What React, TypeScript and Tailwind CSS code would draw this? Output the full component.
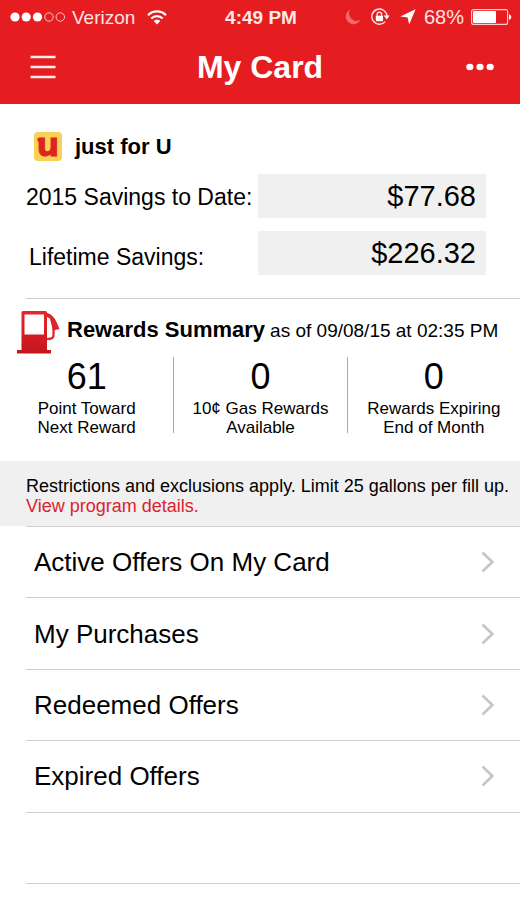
const stats = [
  { value: "61", lines: ["Point Toward", "Next Reward"] },
  { value: "0", lines: ["10¢ Gas Rewards", "Available"] },
  { value: "0", lines: ["Rewards Expiring", "End of Month"] },
];

const links = ["Active Offers On My Card", "My Purchases", "Redeemed Offers", "Expired Offers"];

function StatusBar() {
  return (
    <div className="grid grid-cols-[1fr_auto_1fr] items-center h-[34px] pl-[10px] pr-2 text-[19px] leading-none">
      <div className="flex items-center">
        <svg width="56" height="12" viewBox="0 0 56 12" fill="none" aria-hidden="true">
          <circle cx="5" cy="6" r="4.6" fill="#fff" />
          <circle cx="16.2" cy="6" r="4.6" fill="#fff" />
          <circle cx="27.5" cy="6" r="4.6" fill="#fff" />
          <circle cx="39" cy="6" r="4.2" stroke="#fbc4c4" strokeWidth="1" />
          <circle cx="50.3" cy="6" r="4.2" stroke="#fbc4c4" strokeWidth="1" />
        </svg>
        <span className="ml-[6px] text-[#ffe4e4]">Verizon</span>
        <svg className="ml-3" width="20" height="15" viewBox="0 0 20 15" fill="none" stroke="#fff" strokeWidth="2.2" aria-hidden="true">
          <path d="M1 5.2C6 .2 14 .2 19 5.2" />
          <path d="M4.3 8.5c3.2-3.1 8.2-3.1 11.4 0" />
          <path d="M6.7 11C8.5 9.2 11.5 9.2 13.3 11L10 14.5z" fill="#fff" stroke="none" />
        </svg>
      </div>
      <span className="font-bold text-[#ffe9e9]">4:49 PM</span>
      <div className="flex items-center justify-end">
        <svg width="16" height="16" viewBox="0 0 16 16" fill="#f4696c" aria-hidden="true">
          <path d="M5 .8A7.6 7.6 0 1 0 15.4 10.6 7.4 7.4 0 0 1 5 .8z" />
        </svg>
        <svg className="ml-[10px]" width="19" height="18" viewBox="0 0 19 18" fill="none" stroke="#ffe4e4" strokeWidth="1.4" aria-hidden="true">
          <path d="M14.2 13.6A7.6 7.6 0 1 1 16 8" />
          <path d="M12.7 7.6h6L15.8 11.4z" fill="#fff" stroke="none" />
          <rect x="4.8" y="7.8" width="7.2" height="5.4" rx=".6" fill="#fff" stroke="none" />
          <path d="M6.2 8V6.3a2.2 2.2 0 0 1 4.4 0V8" />
        </svg>
        <svg className="ml-[10px]" width="16" height="16" viewBox="0 0 16 16" fill="#fff" aria-hidden="true">
          <path d="M15.6.3 9.2 15.4 7.6 8.5.3 7.4z" />
        </svg>
        <span className="ml-[8px] text-[20px] text-[#ffe4e4]">68%</span>
        <svg className="ml-[7px]" width="41" height="16" viewBox="0 0 41 16" fill="none" aria-hidden="true">
          <rect x=".6" y=".6" width="36" height="14.8" rx="2" stroke="#fbd0d0" strokeWidth="1.1" />
          <rect x="2" y="2" width="23" height="12" rx="1" fill="#fff" />
          <path d="M38 5.2c3 .6 3 5 0 5.6z" fill="#fff" />
        </svg>
      </div>
    </div>
  );
}

function Header() {
  return (
    <header className="bg-[#e51d21] text-white pb-1">
      <StatusBar />
      <div className="grid grid-cols-[1fr_auto_1fr] items-center h-[66px] px-[26px]">
        <button aria-label="Menu" className="justify-self-start p-1">
          <svg width="26" height="26" viewBox="0 0 26 26" stroke="#ffecec" strokeWidth="2.4" aria-hidden="true">
            <path d="M.5 3h25M.5 13h25M.5 23h25" />
          </svg>
        </button>
        <h1 className="text-[32px] font-bold leading-none">My Card</h1>
        <button aria-label="More" className="justify-self-end">
          <svg width="28" height="8" viewBox="0 0 28 8" fill="#fff" aria-hidden="true">
            <ellipse cx="3.8" cy="4" rx="3.6" ry="3.2" />
            <ellipse cx="14" cy="4" rx="3.6" ry="3.2" />
            <ellipse cx="24.2" cy="4" rx="3.6" ry="3.2" />
          </svg>
        </button>
      </div>
    </header>
  );
}

function ULogo() {
  return (
    <svg className="overflow-visible" width="28" height="29" viewBox="0 0 28 29" aria-hidden="true">
      <rect width="28" height="29" rx="4" fill="#f8d255" />
      <text x="14" y="24" textAnchor="middle" fill="#dd2420" stroke="#dd2420" strokeWidth=".8" fontSize="32" fontWeight="700" fontFamily="DejaVu Sans">
        u
      </text>
      <rect x="3.5" y="6" width="4" height="3.5" fill="#dd2420" />
    </svg>
  );
}

function GasPump() {
  return (
    <svg width="43" height="44" viewBox="0 0 43 44" fill="none" aria-hidden="true">
      <defs>
        <linearGradient id="pump" x1="0" y1="0" x2="0" y2="1">
          <stop offset="0" stopColor="#e8262c" />
          <stop offset="1" stopColor="#c4151c" />
        </linearGradient>
      </defs>
      <path
        fill="url(#pump)"
        fillRule="evenodd"
        d="M6 0h22.5Q30 0 30 1.5V39H34V42.5H0V39H4.5V1.5Q4.5 0 6 0zM7.5 3.5V23.5H27V3.5z"
      />
      <path d="M29 1.5C35 3 38.5 7 42.5 18L36 19.5 33 7.5 29 5.500z" fill="#de2329" />
      <path d="M34.5 8Q37 14 36.5 25Q36 28 30 28" stroke="#de2329" strokeWidth="2.2" />
    </svg>
  );
}

export default function App() {
  return (
    <div className="flex min-h-screen flex-col bg-white text-black font-['Liberation_Sans',Arial,sans-serif]">
      <Header />

      <main className="flex flex-1 flex-col">
        {/* Savings */}
        <section className="pt-7 pl-[26px]">
          <div className="flex items-center gap-[13px] pl-2">
            <ULogo />
            <h2 className="text-[22px] font-bold leading-6">just for U</h2>
          </div>
          <dl className="mt-[13px] grid grid-cols-[232px_1fr] gap-y-[13px] pr-[34px]">
            <dt className="pt-[11px] text-[23px] leading-6 whitespace-nowrap">2015 Savings to Date:</dt>
            <dd className="h-11 bg-[#f0f0f0] pr-[10px] text-right text-[29px] leading-[45px]">$77.68</dd>
            <dt className="pt-[14px] pl-[3px] text-[23px] leading-6 whitespace-nowrap">Lifetime Savings:</dt>
            <dd className="h-11 bg-[#f0f0f0] pr-[10px] text-right text-[29px] leading-[45px]">$226.32</dd>
          </dl>
          <hr className="mt-[23px] border-[#cfcfcf]" />
        </section>

        {/* Rewards */}
        <section className="pt-3 pb-7">
          <div className="flex h-[42px] items-start gap-[7px] pl-[17px]">
            <GasPump />
            <p className="flex items-baseline gap-[5px] pt-[7px] whitespace-nowrap leading-6">
              <strong className="text-[22px]">Rewards Summary</strong>
              <span className="text-[19px]">as of 09/08/15 at 02:35 PM</span>
            </p>
          </div>
          <div className="mt-1 grid grid-cols-3 grid-rows-[76px] text-center">
            {stats.map((stat) => (
              <div key={stat.lines[0]} className="border-l border-[#a8a8a8] first:border-l-0">
                <p className="mb-[2px] text-[36px] leading-[40px]">{stat.value}</p>
                <p className="text-[17px] leading-[19px]">
                  {stat.lines[0]}
                  <br />
                  {stat.lines[1]}
                </p>
              </div>
            ))}
          </div>
        </section>

        <section className="bg-[#f0f0f0] pt-[15px] pb-[10px] pl-[26px] text-[18px] leading-5 whitespace-nowrap">
          <p>Restrictions and exclusions apply. Limit 25 gallons per fill up.</p>
          <a href="#details" className="block text-[#d9232e]">
            View program details.
          </a>
        </section>

        {/* Links, with one empty row at the end */}
        <ul className="ml-[26px] mb-[39px] grid flex-1 auto-rows-fr border-t border-[#cfcfcf]">
          {links.map((label) => (
            <li key={label} className="border-b border-[#cfcfcf]">
              <a href="#offers" className="flex h-full min-h-[70px] items-center justify-between pl-2 pr-[26px] text-[26px] leading-none">
                {label}
                <svg width="13" height="22" viewBox="0 0 13 22" fill="none" stroke="#c6c6c8" strokeWidth="2.6" aria-hidden="true">
                  <path d="M1.5 1.5 11.3 11 1.5 20.5" />
                </svg>
              </a>
            </li>
          ))}
          <li className="border-b border-[#cfcfcf]" />
        </ul>
      </main>
    </div>
  );
}
